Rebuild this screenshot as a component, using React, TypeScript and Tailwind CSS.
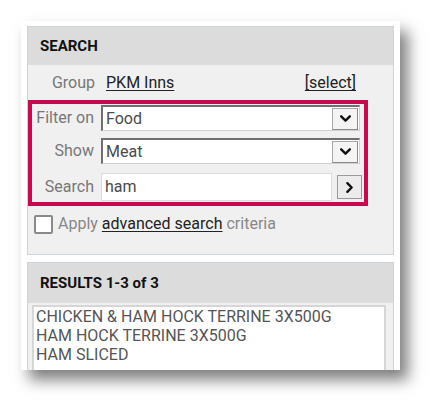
import React from 'react';

const Chevron = ({ dir }: { dir: 'down' | 'right' }) => (
  <svg width="13" height="13" viewBox="0 0 12 12" fill="none" stroke="#111" strokeWidth="2.2" strokeLinecap="round" strokeLinejoin="round">
    {dir === 'down' ? <path d="M2 4l4 4 4-4" /> : <path d="M4 2l4 4-4 4" />}
  </svg>
);

const SelectBox = ({ value }: { value: string }) => (
  <div className="flex h-[26px] w-[259px] items-center bg-white border border-[#cfcfcf] border-t-2 border-l-2 border-t-[#6f6f6f] border-l-[#6f6f6f] pl-[3px] pr-[1px]">
    <span className="flex-1 text-[16px] text-[#4a4a4a]">{value}</span>
    <div className="flex h-[22px] w-[26px] items-center justify-center bg-[#f4f4f4] border border-[#a8a8a8] border-b-[#8a8a8a] border-r-[#8a8a8a]">
      <Chevron dir="down" />
    </div>
  </div>
);

const Row = ({ label, children }: { label: string; children: React.ReactNode }) => (
  <div className="flex items-center">
    <div className="w-[69px] pr-[7px] text-right text-[16px] text-[#777] whitespace-nowrap">{label}</div>
    {children}
  </div>
);

export default function App() {
  return (
    <div className="w-[442px] h-[407px] bg-white pt-[21px] pl-[21px]" style={{ fontFamily: 'Roboto, "Liberation Sans", sans-serif' }}>
      <div className="w-[379px] h-[349px] bg-white overflow-hidden pl-[6px] pt-[5px] shadow-[8px_10px_14px_rgba(0,0,0,0.5)]">
        {/* search panel */}
        <div className="w-[367px] h-[229px] border border-[#cdd4de] bg-[#f0f0f0]">
          <div className="h-[38px] bg-[#dcdcdc] pl-[12px] flex items-center text-[15px] font-bold text-[#111]">SEARCH</div>
          <div className="flex items-center h-[35px] pt-[1px]">
            <div className="w-[67px] text-right text-[16px] text-[#777]">Group</div>
            <a className="ml-[11px] text-[16px] text-[#222] underline underline-offset-2">PKM Inns</a>
            <a className="ml-auto mr-[37px] text-[16px] text-[#222] underline underline-offset-2">[select]</a>
          </div>
          <div className="w-[340px] border-[4px] border-[#c8084f] flex flex-col pt-[1px] pb-[1px]">
            <Row label="Filter on">
              <SelectBox value="Food" />
            </Row>
            <div className="mt-[7px]">
              <Row label="Show">
                <SelectBox value="Meat" />
              </Row>
            </div>
            <div className="mt-[9px]">
              <Row label="Search">
                <div className="flex h-[28px] w-[231px] items-center bg-white border border-[#dcdcdc] pl-[3px] text-[16px] text-[#4a4a4a]">ham</div>
                <div className="ml-[5px] flex h-[24px] w-[25px] items-center justify-center bg-[#ececec] border border-[#9a9a9a]">
                  <Chevron dir="right" />
                </div>
              </Row>
            </div>
          </div>
          <div className="flex items-center mt-[6px] ml-[6px]">
            <div className="w-[19px] h-[19px] bg-white border-2 border-[#8a8a8a] rounded-[2px]" />
            <span className="ml-[5px] text-[16px] text-[#888]">
              Apply <a className="text-[#222] underline underline-offset-2">advanced search</a> criteria
            </span>
          </div>
        </div>
        {/* results panel */}
        <div className="mt-[7px] w-[367px] h-[120px] border border-[#cdd4de] bg-[#f0f0f0]">
          <div className="h-[40px] bg-[#dcdcdc] pl-[12px] flex items-center text-[15px] font-bold text-[#111]">RESULTS 1-3 of 3</div>
          <div className="ml-[4px] mt-[2px] w-[354px] h-[80px] bg-white border-2 border-[#d6d6d6] pl-[2px] text-[16px] leading-[19px] text-[#555]">
            <div>CHICKEN &amp; HAM HOCK TERRINE 3X500G</div>
            <div>HAM HOCK TERRINE 3X500G</div>
            <div>HAM SLICED</div>
          </div>
        </div>
      </div>
    </div>
  );
}
